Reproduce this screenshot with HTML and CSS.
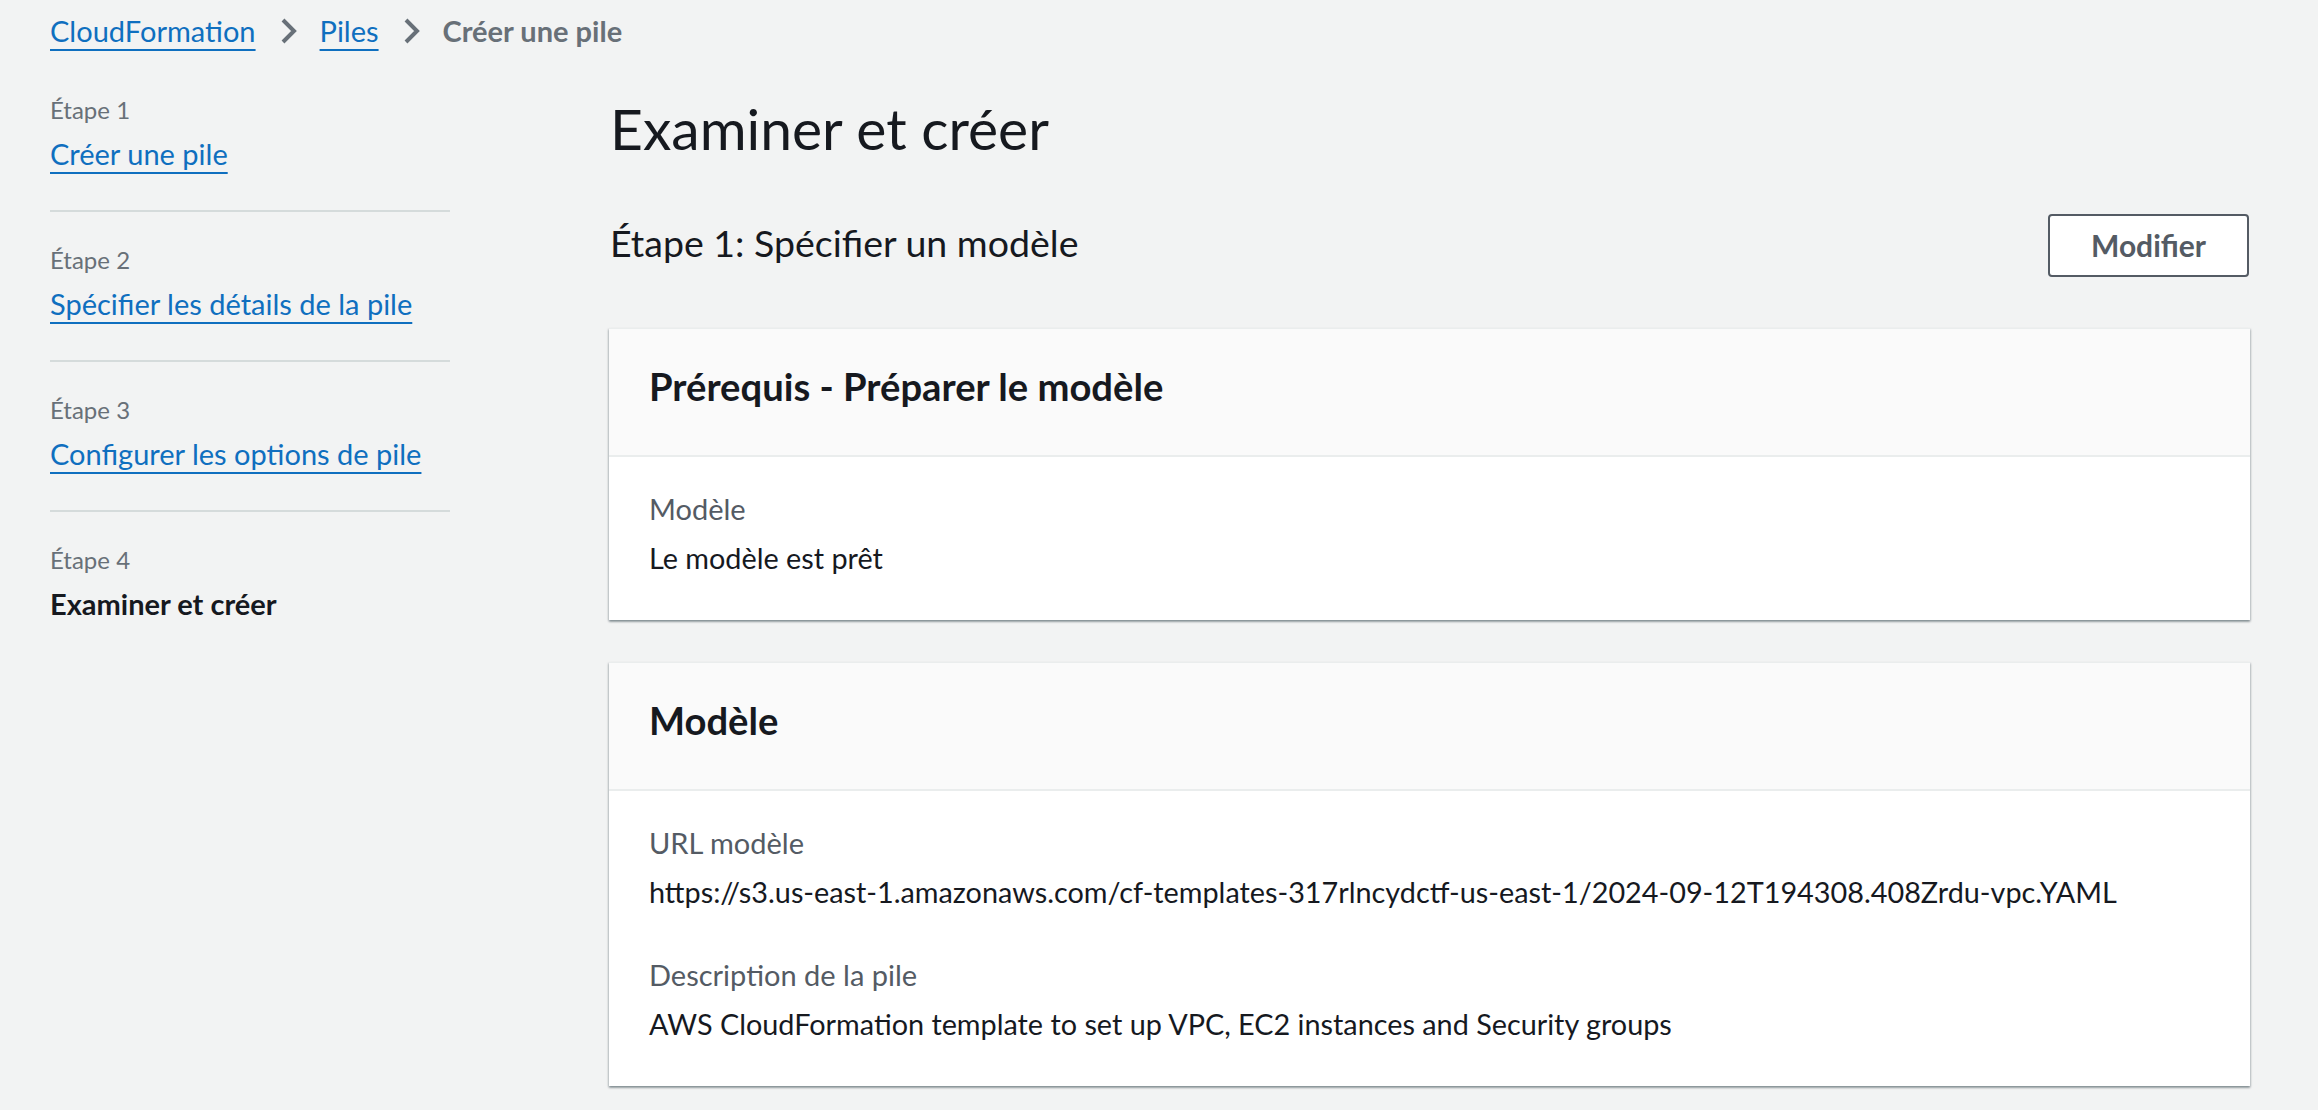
FILE: index.html
```html
<!DOCTYPE html>
<html lang="fr">
<head>
<meta charset="utf-8">
<title>Examiner et créer</title>
<link rel="stylesheet" href="styles.css">
</head>
<body>
  <nav class="breadcrumbs" aria-label="Breadcrumbs">
    <a class="crumb-link" href="#">CloudFormation</a>
    <svg class="crumb-sep" viewBox="0 0 32 32" aria-hidden="true"><path d="M11 5l11 11-11 11"/></svg>
    <a class="crumb-link" href="#">Piles</a>
    <svg class="crumb-sep" viewBox="0 0 32 32" aria-hidden="true"><path d="M11 5l11 11-11 11"/></svg>
    <span class="crumb-current">Créer une pile</span>
  </nav>

  <div class="layout">
    <nav class="wizard-nav">
      <ol class="steps">
        <li class="step">
          <div class="step-label">Étape 1</div>
          <a class="step-link" href="#">Créer une pile</a>
        </li>
        <li class="step">
          <div class="step-label">Étape 2</div>
          <a class="step-link" href="#">Spécifier les détails de la pile</a>
        </li>
        <li class="step">
          <div class="step-label">Étape 3</div>
          <a class="step-link" href="#">Configurer les options de pile</a>
        </li>
        <li class="step">
          <div class="step-label">Étape 4</div>
          <span class="step-current">Examiner et créer</span>
        </li>
      </ol>
    </nav>

    <main class="content">
      <h1 class="page-title">Examiner et créer</h1>

      <div class="section-header">
        <h2 class="section-title">Étape 1: Spécifier un modèle</h2>
        <button class="btn" type="button">Modifier</button>
      </div>

      <section class="container">
        <div class="container-header">
          <h3 class="container-title">Prérequis - Préparer le modèle</h3>
        </div>
        <div class="container-body">
          <div class="kv">
            <div class="kv-label">Modèle</div>
            <div class="kv-value">Le modèle est prêt</div>
          </div>
        </div>
      </section>

      <section class="container">
        <div class="container-header">
          <h3 class="container-title">Modèle</h3>
        </div>
        <div class="container-body">
          <div class="kv">
            <div class="kv-label">URL modèle</div>
            <div class="kv-value">https://s3.us-east-1.amazonaws.com/cf-templates-317rlncydctf-us-east-1/2024-09-12T194308.408Zrdu-vpc.YAML</div>
          </div>
          <div class="kv">
            <div class="kv-label">Description de la pile</div>
            <div class="kv-value">AWS CloudFormation template to set up VPC, EC2 instances and Security groups</div>
          </div>
        </div>
      </section>
    </main>
  </div>
</body>
</html>
```
FILE: styles.css
```css
* { box-sizing: border-box; }

html, body {
  margin: 0;
  background: #f2f3f3;
}

body {
  padding: 9px 68px 0 48px;
  font-family: Lato, "Noto Sans", sans-serif;
  font-size: 29px;
  line-height: 44px;
  color: #16191f;
  min-height: 1110px;
}

/* Breadcrumbs */
.breadcrumbs {
  display: flex;
  align-items: center;
  height: 44px;
  padding-left: 2px;
}

.crumb-link,
.step-link {
  color: #0f6fbf;
  text-decoration: underline;
  text-decoration-thickness: 2px;
  text-underline-offset: 7px;
}

.crumb-sep {
  width: 32px;
  height: 32px;
  margin: 0 16px;
  flex: none;
}

.crumb-sep path {
  fill: none;
  stroke: #687078;
  stroke-width: 4;
  stroke-linejoin: miter;
}

.crumb-current {
  color: #687078;
  font-weight: 700;
}

/* Layout */
.layout {
  display: flex;
  align-items: flex-start;
}

.wizard-nav {
  width: 402px;
  flex: none;
  padding: 9px 0 0 2px;
}

.steps {
  list-style: none;
  margin: 0;
  padding: 0;
}

.step {
  padding: 32px 0 34px;
  border-top: 2px solid #d5dbdb;
}

.step:first-child {
  border-top: none;
}

.step-label {
  font-size: 24px;
  line-height: 32px;
  color: #687078;
}

.step-link,
.step-current {
  display: inline-block;
  margin-top: 6px;
  line-height: 44px;
}

.step-current {
  font-weight: 700;
  color: #16191f;
}

/* Main content */
.content {
  flex: 1;
  min-width: 0;
  margin-left: 159px;
  padding-top: 41px;
}

.page-title {
  margin: 0;
  font-size: 57px;
  line-height: 68px;
  font-weight: 400;
  padding-left: 1px;
}

.section-header {
  display: flex;
  align-items: center;
  justify-content: space-between;
  margin-top: 52px;
  min-height: 63px;
}

.section-title {
  margin: 0 0 5px 1px;
  font-size: 37.5px;
  line-height: 48px;
  font-weight: 400;
}

.btn {
  font-family: inherit;
  font-size: 30px;
  font-weight: 700;
  line-height: 43px;
  color: #545b64;
  background: #ffffff;
  border: 2px solid #545b64;
  border-radius: 4px;
  padding: 8px 41px;
  margin-right: 1px;
}

/* Containers */
.container {
  margin-top: 42px;
  background: #ffffff;
  border-top: 1px solid #eaeded;
  box-shadow: 0 2px 2px 0 rgba(0, 28, 36, 0.3),
              1px 1px 2px 0 rgba(0, 28, 36, 0.15),
              -1px 1px 2px 0 rgba(0, 28, 36, 0.15);
}

.section-header + .container {
  margin-top: 51px;
}

.container-header {
  background: #fafafa;
  border-bottom: 2px solid #eaeded;
  padding: 33px 40px 45px;
}

.container-title {
  margin: 0;
  font-size: 38.2px;
  line-height: 48px;
  font-weight: 700;
}

.container-body {
  padding: 32px 40px 42px;
}

.kv + .kv {
  margin-top: 43px;
}

.kv-label {
  color: #545b64;
  line-height: 40px;
}

.kv-value {
  margin-top: 9px;
  font-size: 28.8px;
  line-height: 40px;
}
```
